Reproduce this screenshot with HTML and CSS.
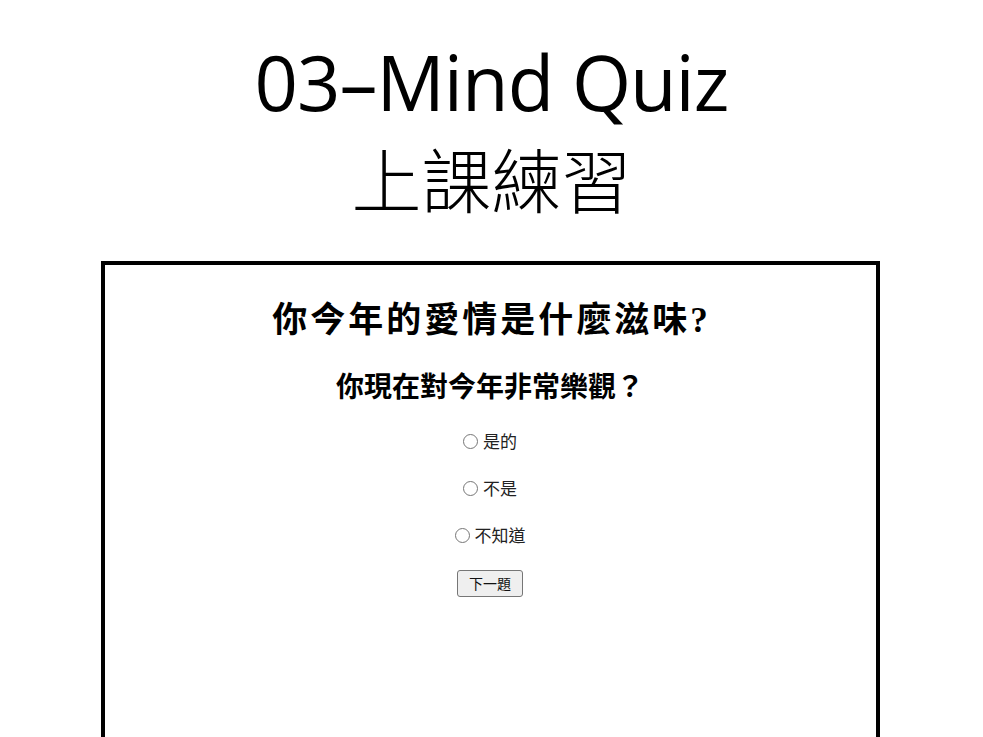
FILE: index.html
```html
<!DOCTYPE html>
<html lang="zh-Hant">
<head>
<meta charset="utf-8">
<title>03–Mind Quiz 上課練習</title>
<link rel="stylesheet" href="styles.css">
</head>
<body>
<header class="slide-title">
  <h1 class="title-en">03–Mind Quiz</h1>
  <div class="title-zh">上課練習</div>
</header>
<main class="frame">
  <h2 class="quiz-title">你今年的愛情是什麼滋味<span class="q-mark">?</span></h2>
  <h3 class="question">你現在對今年非常樂觀？</h3>
  <form class="options">
    <label class="option"><input type="radio" name="a1">是的</label>
    <label class="option"><input type="radio" name="a1">不是</label>
    <label class="option"><input type="radio" name="a1">不知道</label>
    <button type="button" class="next">下一題</button>
  </form>
</main>
</body>
</html>
```

FILE: styles.css
```css
html, body {
  margin: 0;
  padding: 0;
  background: #fff;
  height: 737px;
  overflow: hidden;
}
body {
  display: flex;
  flex-direction: column;
  align-items: center;
  font-family: "Noto Sans CJK TC", sans-serif;
  color: #000;
}
.slide-title {
  display: flex;
  flex-direction: column;
  align-items: center;
  padding-top: 34px;
}
.title-en {
  margin: 0;
  font-family: "Open Sans", "Noto Sans", sans-serif;
  font-weight: 400;
  font-size: 76px;
  line-height: 96px;
  letter-spacing: -1px;
}
.title-zh {
  font-family: "Noto Sans CJK TC", sans-serif;
  font-weight: 300;
  font-size: 70px;
  line-height: 104px;
  margin-top: -4px;
}
.frame {
  box-sizing: border-box;
  margin-top: 31px;
  margin-left: -3px;
  width: 779px;
  flex: 1;
  border: 4px solid #000;
  border-bottom: none;
  display: flex;
  flex-direction: column;
  align-items: center;
}
.quiz-title {
  margin: 29px 0 0;
  font-family: "Noto Sans CJK TC", sans-serif;
  font-weight: 700;
  font-size: 35px;
  line-height: 46px;
  letter-spacing: 3px;
  text-indent: 3px;
}
.q-mark {
  font-family: "Liberation Serif", serif;
}
.question {
  margin: 22px 0 0;
  font-family: "Noto Sans CJK TC", sans-serif;
  font-weight: 700;
  font-size: 28px;
  line-height: 38px;
}
.options {
  display: flex;
  flex-direction: column;
  align-items: center;
  gap: 23px;
  margin-top: 25px;
}
.option {
  font-family: "Noto Sans CJK TC", sans-serif;
  font-size: 17px;
  line-height: 24px;
  color: #222;
  display: flex;
  align-items: center;
}
.option input {
  margin: 0 5px 0 0;
  width: 15px;
  height: 15px;
}
.next {
  font-family: "Noto Sans CJK TC", sans-serif;
  font-size: 14px;
  line-height: 19px;
  padding: 3px 11px;
  margin-top: 0;
  border: 1px solid #767676;
  border-radius: 3px;
  background: #efefef;
  color: #111;
}
```
